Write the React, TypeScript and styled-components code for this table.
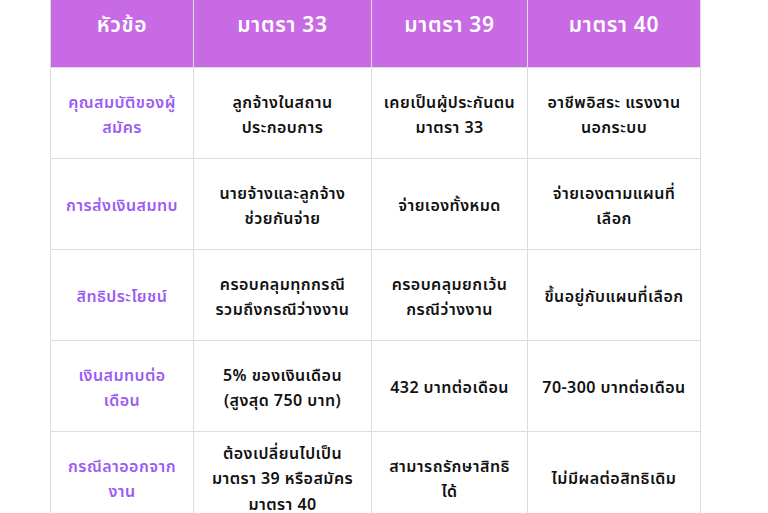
import * as React from 'react';
import styled, { createGlobalStyle } from 'styled-components';

const GlobalStyle = createGlobalStyle`
  html, body {
    margin: 0;
    padding: 0;
    background: #ffffff;
  }
  body {
    font-family: 'Noto Sans Thai', 'Noto Sans', 'DejaVu Sans', sans-serif;
    overflow: hidden;
  }
`;

const Page = styled.div`
  width: 768px;
  height: 513px;
  overflow: hidden;
  padding-left: 50px;
  box-sizing: border-box;
`;

const Table = styled.table`
  width: 651px;
  margin-top: -21px;
  border-collapse: collapse;
  table-layout: fixed;
`;

const HeadCell = styled.th`
  height: 84px;
  padding: 4px 4px 0;
  background: #c86ae4;
  color: #ffffff;
  font-size: 21px;
  font-weight: 600;
  letter-spacing: 0.7px;
  text-align: center;
  vertical-align: middle;
  border: 1px solid #dddddd;
  border-top: none;
`;

const Cell = styled.td<{ $label?: boolean }>`
  height: 91px;
  padding: 6px 4px 0;
  box-sizing: border-box;
  text-align: center;
  vertical-align: middle;
  border: 1px solid #dddddd;
  font-size: 16px;
  line-height: 25.5px;
  font-weight: 600;
  letter-spacing: 0.45px;
  color: ${({ $label }) => ($label ? '#9b5cf2' : '#111111')};
`;

const Line = styled.span`
  display: block;
  white-space: nowrap;
`;

const columns = ['หัวข้อ', 'มาตรา 33', 'มาตรา 39', 'มาตรา 40'];
const widths = [143, 178, 156, 173];

const rows: string[][][] = [
  [
    ['คุณสมบัติของผู้', 'สมัคร'],
    ['ลูกจ้างในสถาน', 'ประกอบการ'],
    ['เคยเป็นผู้ประกันตน', 'มาตรา 33'],
    ['อาชีพอิสระ แรงงาน', 'นอกระบบ'],
  ],
  [
    ['การส่งเงินสมทบ'],
    ['นายจ้างและลูกจ้าง', 'ช่วยกันจ่าย'],
    ['จ่ายเองทั้งหมด'],
    ['จ่ายเองตามแผนที่', 'เลือก'],
  ],
  [
    ['สิทธิประโยชน์'],
    ['ครอบคลุมทุกกรณี', 'รวมถึงกรณีว่างงาน'],
    ['ครอบคลุมยกเว้น', 'กรณีว่างงาน'],
    ['ขึ้นอยู่กับแผนที่เลือก'],
  ],
  [
    ['เงินสมทบต่อ', 'เดือน'],
    ['5% ของเงินเดือน', '(สูงสุด 750 บาท)'],
    ['432 บาทต่อเดือน'],
    ['70-300 บาทต่อเดือน'],
  ],
  [
    ['กรณีลาออกจาก', 'งาน'],
    ['ต้องเปลี่ยนไปเป็น', 'มาตรา 39 หรือสมัคร', 'มาตรา 40'],
    ['สามารถรักษาสิทธิ', 'ได้'],
    ['ไม่มีผลต่อสิทธิเดิม'],
  ],
];

export default function App() {
  return (
    <Page>
      <GlobalStyle />
      <Table>
        <colgroup>
          {widths.map((w, i) => (
            <col key={i} style={{ width: w }} />
          ))}
        </colgroup>
        <thead>
          <tr>
            {columns.map(c => (
              <HeadCell key={c}>{c}</HeadCell>
            ))}
          </tr>
        </thead>
        <tbody>
          {rows.map((r, ri) => (
            <tr key={ri}>
              {r.map((lines, i) => (
                <Cell key={i} $label={i === 0}>
                  {lines.map(l => (
                    <Line key={l}>{l}</Line>
                  ))}
                </Cell>
              ))}
            </tr>
          ))}
        </tbody>
      </Table>
    </Page>
  );
}
